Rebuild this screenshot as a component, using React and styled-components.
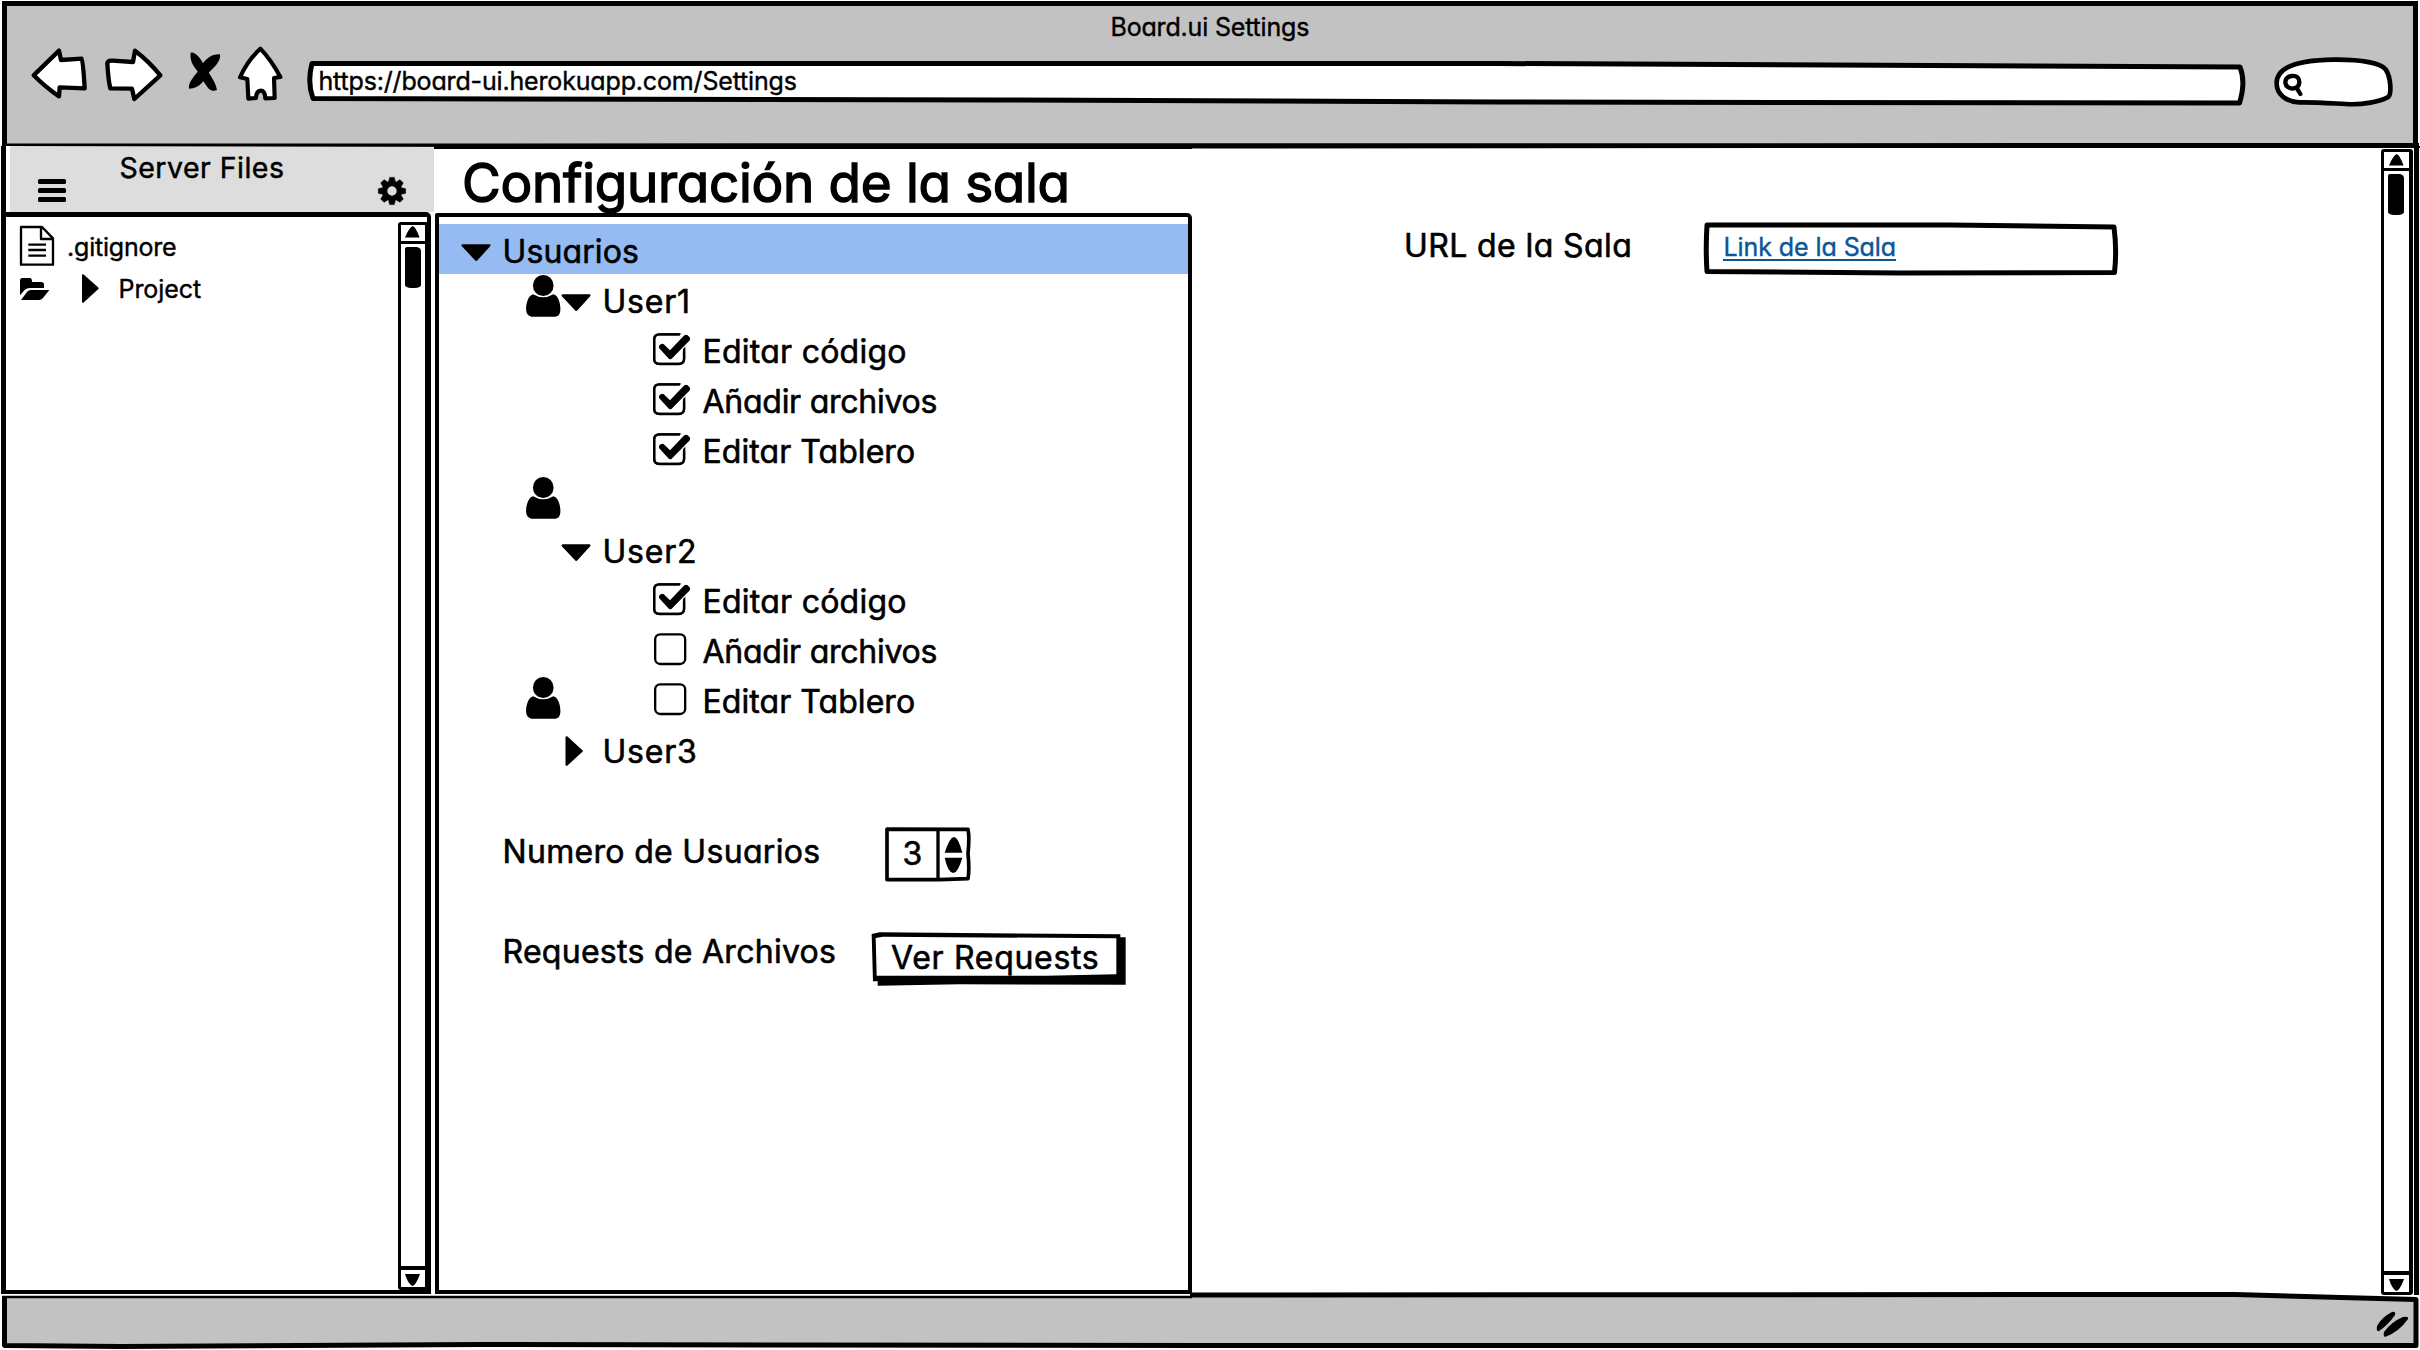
import React from "react";
import styled, { createGlobalStyle } from "styled-components";

const INK = "#000";
const CHROME = "#c2c2c2";

const GlobalStyle = createGlobalStyle`
  * { box-sizing: border-box; }
  body { margin: 0; background: #fff; color: ${INK}; font-family: Inter, "Liberation Sans", sans-serif; font-feature-settings: "cv11"; }
  svg { display: block; flex: none; overflow: visible; }
`;

/* ---------- shared ---------- */
const Label = styled.span`
  flex: none;
  white-space: pre;
  font-size: ${(p) => p.$size || 32}px;
  line-height: ${(p) => p.$line || 56}px;
  letter-spacing: ${(p) => p.$track || 0}px;
  -webkit-text-stroke: ${(p) => p.$weight ?? 0.6}px currentColor;
`;

const Backdrop = styled.svg`
  position: absolute;
  inset: 0;
  pointer-events: none;
`;

/* ---------- window ---------- */
const Window = styled.div`
  position: relative;
  width: 2420px;
  height: 1350px;
  display: grid;
  grid-template-rows: 146px 1150px 54px;
  overflow: hidden;
`;

const Header = styled.header`
  position: relative;
  margin: 1px 2px 0 2px;
  padding-left: 24px;
  background: ${CHROME};
  border: 5px solid ${INK};
  border-bottom: 0;
  height: 145px;
`;

const TitleBar = styled.div`
  height: 50px;
  padding-left: 1079.5px;
  padding-top: 1px;
`;

const Toolbar = styled.div`
  display: flex;
  align-items: flex-start;
  margin-top: -10px;
`;

const NavButton = styled.button`
  display: block;
  flex: none;
  padding: 0;
  border: 0;
  background: none;
  margin: ${(p) => p.$top}px ${(p) => p.$right}px 0 0;
`;

const AddressBar = styled.div`
  position: relative;
  width: 1940px;
  height: 50px;
  margin-top: 10px;
  padding-left: 13px;
`;

const SearchPill = styled.div`
  margin: 9.5px 0 0 28.5px;
`;

/* ---------- body ---------- */
const Body = styled.div`
  display: grid;
  grid-template-columns: 435px 757px 1fr;
`;

const Sidebar = styled.aside`
  display: grid;
  grid-template-rows: 66px 1082px;
`;

const SidebarHeader = styled.div`
  display: flex;
  align-items: flex-start;
  height: 66px;
  margin: 0 1px;
  padding-left: 26px;
  border-left: 5.5px solid ${INK};
  background: linear-gradient(90deg, #fff 3.5px, #ddd 3.5px);
`;

const MenuBars = styled.div`
  display: grid;
  gap: 4px;
  width: 28px;
  margin: 33px 54px 0 5.5px;
  &::before, &::after { content: ""; height: 5px; border-radius: 1.5px; background: ${INK}; }
`;

const MenuBar = styled.i`
  height: 5px;
  border-radius: 1.5px;
  background: ${INK};
`;

const GearSlot = styled.div`
  margin: 30.5px 0 0 auto;
  padding-right: 28px;
`;

const FilePanel = styled.div`
  display: flex;
  width: 429.5px;
  height: 1082px;
  margin-left: 1px;
  border: 5px solid ${INK};
  border-right-width: 4.5px;
  border-bottom-width: 4.5px;
  border-top-right-radius: 5px;
`;

const FileList = styled.div`
  flex: 1;
  padding: 9px 0 0 14px;
`;

const FileRow = styled.div`
  display: flex;
  align-items: flex-start;
  height: ${(p) => p.$height}px;
`;

const IconSlot = styled.div`
  flex: none;
  width: ${(p) => p.$width}px;
  padding-top: ${(p) => p.$top || 0}px;
`;

/* ---------- scrollbars ---------- */
const Track = styled.div`
  display: flex;
  flex: none;
  flex-direction: column;
  width: ${(p) => p.$width}px;
  height: ${(p) => p.$height}px;
  margin-top: ${(p) => p.$top}px;
  margin-right: ${(p) => p.$right || 0}px;
  border: 3.5px solid ${INK};
  border-right-width: 4px;
  border-radius: 3px;
  background: #fff;
`;

const TrackCell = styled.div`
  display: flex;
  justify-content: center;
  height: ${(p) => (p.$end ? 21 : 19)}px;
  padding-top: ${(p) => (p.$end ? 4 : 1.5)}px;
  margin-top: ${(p) => (p.$end ? "auto" : 0)};
  border-bottom: ${(p) => (p.$end ? 0 : 3.5)}px solid ${INK};
  border-top: ${(p) => (p.$end ? 4 : 0)}px solid ${INK};
`;

const Thumb = styled.div`
  width: 16px;
  height: 41px;
  margin: 3px auto 0;
  background: ${INK};
  border-radius: 2px 5px 6px 6px / 2px 4px 3px 3px;
`;

/* ---------- settings ---------- */
const Settings = styled.main`
  display: grid;
  grid-template-rows: 67px 1081px;
`;

const HeadingRow = styled.div`
  height: 67px;
  margin-left: -1px;
  padding-left: 28px;
  border-top: 3px solid ${INK};
`;

const Heading = styled.h1`
  margin: 0;
  font-weight: 400;
  font-size: 53px;
  line-height: 68px;
  letter-spacing: -0.3px;
  -webkit-text-stroke: 1.4px currentColor;
  white-space: pre;
`;

const TreePanel = styled.div`
  position: relative;
  height: 1081px;
  padding-top: 11px;
`;

const PanelOutline = styled.div`
  position: absolute;
  inset: 0 0.5px 0 0;
  border: 4.5px solid ${INK};
  border-top-width: 4px;
  border-radius: 2px 5px 0 0;
  pointer-events: none;
`;

const Row = styled.div`
  display: flex;
  align-items: flex-start;
  height: 50px;
  padding-left: ${(p) => p.$indent || 0}px;
  background: ${(p) => (p.$selected ? "#95bbf2" : "transparent")};
`;

const Extras = styled.div`
  display: grid;
  grid-template-rows: 100px 60px;
  padding: 50px 0 0 67.5px;
`;

const Field = styled.div`
  display: flex;
  align-items: flex-start;
`;

const FieldName = styled.div`
  flex: none;
  width: ${(p) => p.$width}px;
`;

const Stepper = styled.div`
  position: relative;
  width: 86px;
  height: 55px;
  margin-top: 3px;
  padding-left: 17.5px;
`;

const Button = styled.button`
  position: relative;
  width: 256px;
  height: 54px;
  margin-top: 8px;
  padding: 0 0 0 20px;
  border: 0;
  background: none;
  color: inherit;
  font: inherit;
  font-feature-settings: inherit;
  text-align: left;
`;

const Front = styled.span`
  position: relative;
  display: block;
  height: ${(p) => p.$height}px;
  margin-top: ${(p) => p.$top || 0}px;
`;

const RoomPane = styled.section`
  display: flex;
  align-items: flex-start;
  border-top: 2px solid ${INK};
`;

const RoomField = styled.div`
  display: flex;
  align-items: flex-start;
  width: 1188.5px;
  padding: 70px 0 0 212px;
`;

const LinkBox = styled.div`
  position: relative;
  width: 414px;
  height: 53px;
  margin-top: 4px;
  padding-left: 19px;
`;

const RoomLink = styled.a`
  position: relative;
  display: inline-block;
  width: 172.5px;
  height: 39px;
  white-space: pre;
  color: #0b5699;
  border-bottom: 2px solid #0b5699;
  font-size: 25px;
  line-height: 50px;
  letter-spacing: -0.08px;
  text-indent: 0.5px;
  -webkit-text-stroke: 0.4px currentColor;
`;

const RightEdge = styled.div`
  flex: none;
  width: 5px;
  height: 1150px;
  margin: -3px 0 0 1.5px;
  background: ${INK};
`;

const Footer = styled.footer`
  position: relative;
`;

/* ---------- drawings ---------- */
const Chevron = ({ open, space = 41.5 }) => (
  <IconSlot $width={space} $top={open ? 19.5 : 11.5}>
    {open ? (
      <svg width="30" height="18" viewBox="0 0 90 53">
        <path d="M5 4 H85 L46 47 Z" fill={INK} stroke={INK} strokeWidth="7" strokeLinejoin="round" />
      </svg>
    ) : (
      <svg width="22" height="30" viewBox="-14 0 66 90">
        <path d="M3 4 L48 45 L3 86 Z" fill={INK} stroke={INK} strokeWidth="7" strokeLinejoin="round" />
      </svg>
    )}
  </IconSlot>
);

const Person = () => (
  <svg width="34.5" height="42" viewBox="228 165 103 126">
    <ellipse cx="279.5" cy="196.5" rx="31" ry="31.5" fill={INK} />
    <path d="M249 223 Q279 241 310 223 C325 227 331 250 331 268 Q331 289 316 290 L244 290 Q228 288 228 268 C228 247 236 226 249 223Z" fill={INK} />
  </svg>
);

const Checkbox = ({ checked }) => (
  <IconSlot $width={checked ? 49.5 : 48.5} $top={9}>
    <svg width="38" height="32" viewBox="609 339 114 96">
      <rect x="612.5" y="343" width="90" height="89" rx="15" fill="#fff" stroke={INK} strokeWidth="7" />
      {checked && (
        <>
          <path d="M640 378 L660 402 L716 344" fill="none" stroke="#fff" strokeWidth="36" />
          <path d="M690 343 H628 Q612.5 343 612.5 358 V416 Q612.5 431.5 628 431.5 H686 Q702 431.5 702 416 V394" fill="none" stroke={INK} strokeWidth="7" />
          <path d="M627 384 Q625 377 632 373 Q638 369 643 374 L660 391 L703 346 Q708 342 713 346 L719 352 Q723 357 718 362 L665 416 Q660 420 655 415Z" fill={INK} />
        </>
      )}
    </svg>
  </IconSlot>
);

const Gear = () => (
  <svg width="28" height="28" viewBox="-14 -14 28 28">
    {[0, 45, 90, 135, 180, 225, 270, 315].map((a) => (
      <path key={a} d="M-3.6 -8 L-2.3 -13.6 H2.3 L3.6 -8Z" fill={INK} stroke={INK} strokeWidth="0.6" strokeLinejoin="round" transform={`rotate(${a})`} />
    ))}
    <circle r="7.3" fill="none" stroke={INK} strokeWidth="5.2" />
  </svg>
);

const Tip = ({ down }) => (
  <svg width="15" height="12" viewBox="0 0 15 12">
    {down ? <path d="M0 0 H15 Q11 11 7.5 12 Q3 10 0 0Z" fill={INK} /> : <path d="M0 11.5 Q4 2 7.5 0 Q11 1 14.5 11.5Z" fill={INK} />}
  </svg>
);

const Scrollbar = ({ width, height, top, right }) => (
  <Track $width={width} $height={height} $top={top} $right={right}>
    <TrackCell><Tip /></TrackCell>
    <Thumb />
    <TrackCell $end><Tip down /></TrackCell>
  </Track>
);

const stroke = { fill: "#fff", stroke: INK, strokeLinejoin: "round", strokeLinecap: "round" };

const USERS = [
  { name: "User1", track: 0.8, open: true, person: true, rights: [true, true, true], gapAfter: true },
  { name: "User2", track: 0.8, open: true, rights: [true, false, false], lastPerson: true },
  { name: "User3", track: 0.8, open: false, rights: [] },
];
const RIGHTS = [
  ["Editar código", 0.25],
  ["Añadir archivos", -0.26],
  ["Editar Tablero", 0.06],
];

const UserBranch = ({ user }) => (
  <>
    <Row $indent={91}>
      <IconSlot $width={35} $top={1}>{user.person && <Person />}</IconSlot>
      <Chevron open={user.open} />
      <Label $track={user.track}>{user.name}</Label>
    </Row>
    {user.rights.map((on, i) => (
      <Row key={RIGHTS[i][0]} $indent={91}>
        <IconSlot $width={on ? 127 : 128} $top={2.5}>{user.lastPerson && i === 2 && <Person />}</IconSlot>
        <Checkbox checked={on} />
        <Label $track={RIGHTS[i][1]}>{RIGHTS[i][0]}</Label>
      </Row>
    ))}
    {user.gapAfter && (
      <Row $indent={91}>
        <IconSlot $width={35} $top={3}><Person /></IconSlot>
      </Row>
    )}
  </>
);

export default function App() {
  return (
    <Window>
      <GlobalStyle />
      <Header>
        <TitleBar>
          <Label $size={25} $line={40} $track={-0.18} $weight={0.4}>Board.ui Settings</Label>
        </TitleBar>
        <Toolbar>
          <NavButton aria-label="Back" $top={2} $right={18}>
            <svg width="56" height="52" viewBox="94 52 168 156">
              <path d="M102 134 L178 60 L184 88 L246 84 Q250 86 255 173 L180 170 L178 197 Q140 172 102 134Z" {...stroke} strokeWidth="13" />
            </svg>
          </NavButton>
          <NavButton aria-label="Forward" $top={2} $right={24.5}>
            <svg width="58" height="54" viewBox="316 52 174 162">
              <path d="M323 98 Q325 89 338 90 L400 94 L406 60 Q448 92 482 134 L404 205 L397 174 L332 173 Q326 150 323 98Z" {...stroke} strokeWidth="13" />
            </svg>
          </NavButton>
          <NavButton aria-label="Stop" $top={6} $right={17}>
            <svg width="33" height="39" viewBox="562 64 99 117">
              <path d="M570 66 C585 63 601 84 612 108 C627 132 645 152 649 178 C640 182 631 180 624 174 C612 160 604 146 597 128 C582 112 566 94 570 66Z" fill={INK} />
              <path d="M658 71 C662 90 640 112 626 124 C612 146 600 174 565 174 C562 156 580 138 592 122 C604 98 624 68 658 71Z" fill={INK} />
            </svg>
          </NavButton>
          <NavButton aria-label="Home" $top={0} $right={23}>
            <svg width="45" height="55" viewBox="713 47 135 165">
              <path d="M780 55 Q812 88 840 140 L821 143 L823 203 L795 204 Q794 181 781 181 Q768 182 767 203 L744 205 L741 146 L719 141 Q742 90 780 55Z" {...stroke} strokeWidth="12.5" />
            </svg>
          </NavButton>
          <AddressBar>
            <Backdrop width="1940" height="50" viewBox="307 56 1940 50">
              <path d="M313 63.5 L1500 63.5 L2241 67 Q2247 82 2240.5 103 L1500 102 L1000 100 L314 98.5 Q308 82 313 63.5Z" {...stroke} strokeWidth="5" />
            </Backdrop>
            <Front $height={49}>
              <Label $size={25} $line={50} $track={-0.16} $weight={0.4}>https://board-ui.herokuapp.com/Settings</Label>
            </Front>
          </AddressBar>
          <SearchPill>
            <svg width="119" height="52" viewBox="525 168 357 156">
              <path d="M600 307 C560 305 532 282 533 248 C534 200 600 180 705 179 C790 178 846 190 860 208 C876 232 879 285 866 292 C845 304 790 316 740 312 C700 310 650 306 600 307Z" {...stroke} strokeWidth="14" />
              <path d="M578 228 Q602 226 601 248 Q600 264 580 266 Q559 262 559 246 Q560 230 578 228Z M592 262 L604 282" {...stroke} strokeWidth="13" />
            </svg>
          </SearchPill>
        </Toolbar>
        <Backdrop width="2412" height="146" viewBox="0 0 2412 146">
          <path d="M-3 137.5 L2412 137 L2412 141.5 L1200 142.5 L-3 140Z" fill={INK} />
        </Backdrop>
      </Header>

      <Body>
        <Sidebar>
          <SidebarHeader>
            <MenuBars><MenuBar /></MenuBars>
            <Label $size={28.5} $line={43} $track={0.48} $weight={0.5}>Server Files</Label>
            <GearSlot><Gear /></GearSlot>
          </SidebarHeader>
          <FilePanel>
            <FileList>
              <FileRow $height={51}>
                <IconSlot $width={47}>
                  <svg width="34" height="40" viewBox="60 591 102 120">
                    <path d="M63 594 H126 L159 628 V707 H63Z M123 594 V630 H159" fill="none" stroke={INK} strokeWidth="7" strokeLinejoin="round" />
                    <path d="M85 647H138M85 663H138M85 680H138" stroke={INK} strokeWidth="7" />
                  </svg>
                </IconSlot>
                <Label $size={25} $line={43} $weight={0.4} $track={-0.2}>.gitignore</Label>
              </FileRow>
              <FileRow $height={40}>
                <IconSlot $width={62} $top={1}>
                  <svg width="30" height="22" viewBox="60 747 90 66">
                    <path d="M60 799 V754 Q60 747 67 747 H90 Q96 747 96 759 H124 Q132 759 132 767 V777 H90 Q80 777 74 783Z" fill={INK} />
                    <path d="M63 813 L81 789 Q86 783 93 783 H148 L129 807 Q124 813 117 813Z" fill={INK} />
                  </svg>
                </IconSlot>
                <IconSlot $width={36.5}>
                  <svg width="17" height="30" viewBox="246 746 51 87">
                    <path d="M249 739 L293 778 L249 819Z" fill={INK} stroke={INK} strokeWidth="6" strokeLinejoin="round" />
                  </svg>
                </IconSlot>
                <Label $size={25} $line={24} $weight={0.4} $track={-0.05}>Project</Label>
              </FileRow>
            </FileList>
            <Scrollbar width={31} height={1068} top={4.5} right={-2} />
          </FilePanel>
        </Sidebar>

        <Settings>
          <HeadingRow>
            <Heading>Configuración de la sala</Heading>
          </HeadingRow>
          <TreePanel>
            <Row $selected $indent={25.5}>
              <Chevron open space={42} />
              <Label $track={0.12}>Usuarios</Label>
            </Row>
            {USERS.map((u) => <UserBranch key={u.name} user={u} />)}
            <Extras>
              <Field>
                <FieldName $width={382.5}><Label $track={0.32}>Numero de Usuarios</Label></FieldName>
                <Stepper>
                  <Backdrop width="86" height="55" viewBox="76 50 258 165">
                    <path d="M82 56.5 L325 57 Q330 80 325 130 Q330 180 325 205 L240 208 L82 208Z" {...stroke} strokeWidth="11" />
                    <path d="M235 57 V208" stroke={INK} strokeWidth="10" />
                    <path d="M283 80 Q296 81 308 127 H255 Q270 81 283 80Z M255 142 H308 Q295 187 281 188 Q265 187 255 142Z" fill={INK} />
                  </Backdrop>
                  <Front $height={53}><Label $line={54}>3</Label></Front>
                </Stepper>
              </Field>
              <Field>
                <FieldName $width={368.5}><Label $track={0.28}>Requests de Archivos</Label></FieldName>
                <Button>
                  <Backdrop width="256" height="54" viewBox="34 366 768 162">
                    <path d="M36 372 L60 367 L782 373 V382 H798 V524 L300 523 L54 527 V514 H40Z" fill={INK} />
                    <path d="M48 384 L70 380 L770 385 V493 L560 497 L51 497Z" fill="#fff" />
                  </Backdrop>
                  <Front $height={50} $top={-4}><Label $line={52} $track={0.7}>Ver Requests</Label></Front>
                </Button>
              </Field>
            </Extras>
            <PanelOutline />
          </TreePanel>
        </Settings>

        <RoomPane>
          <RoomField>
            <FieldName $width={300}><Label $line={55} $track={0.4}>URL de la Sala</Label></FieldName>
            <LinkBox>
              <Backdrop width="414" height="53" viewBox="1704 222 414 53">
                <path d="M1707 225 L1950 225 L2114 227 Q2117 250 2114.5 272.5 L1900 273 L1707 271.5 Q1705.5 250 1707 225Z" {...stroke} strokeWidth="5" />
              </Backdrop>
              <RoomLink>Link de la Sala</RoomLink>
            </LinkBox>
          </RoomField>
          <Scrollbar width={32} height={1146} top={1} />
          <RightEdge />
        </RoomPane>
      </Body>

      <Footer>
        <Backdrop width="2420" height="54" viewBox="0 1296 2420 54">
          <path d="M4.5 1297 L1192 1297 L1192 1295 L2235 1295 L2416 1300 L2416 1346 L1200 1345 L480 1344.5 L120 1346.5 L5 1345.5Z" fill={CHROME} />
          <path d="M2 1297 H1192" stroke={INK} strokeWidth="2.5" />
          <path d="M1190 1295 L2235 1294.5 L2416 1299.5 L2416 1345.5 L1200 1345.5 L480 1344.5 L120 1346.5 L4.5 1345.5 L4.5 1297" fill="none" stroke={INK} strokeWidth="5" strokeLinejoin="round" />
          <path d="M2392 1312 Q2396 1311 2395 1315 Q2388 1325 2379 1331 Q2376 1332 2377 1326 Q2382 1317 2392 1312Z M2403 1317 Q2409 1316 2408 1319 Q2399 1332 2385 1337 Q2383 1336 2384 1332 Q2391 1322 2403 1317Z" fill={INK} />
        </Backdrop>
      </Footer>
    </Window>
  );
}
